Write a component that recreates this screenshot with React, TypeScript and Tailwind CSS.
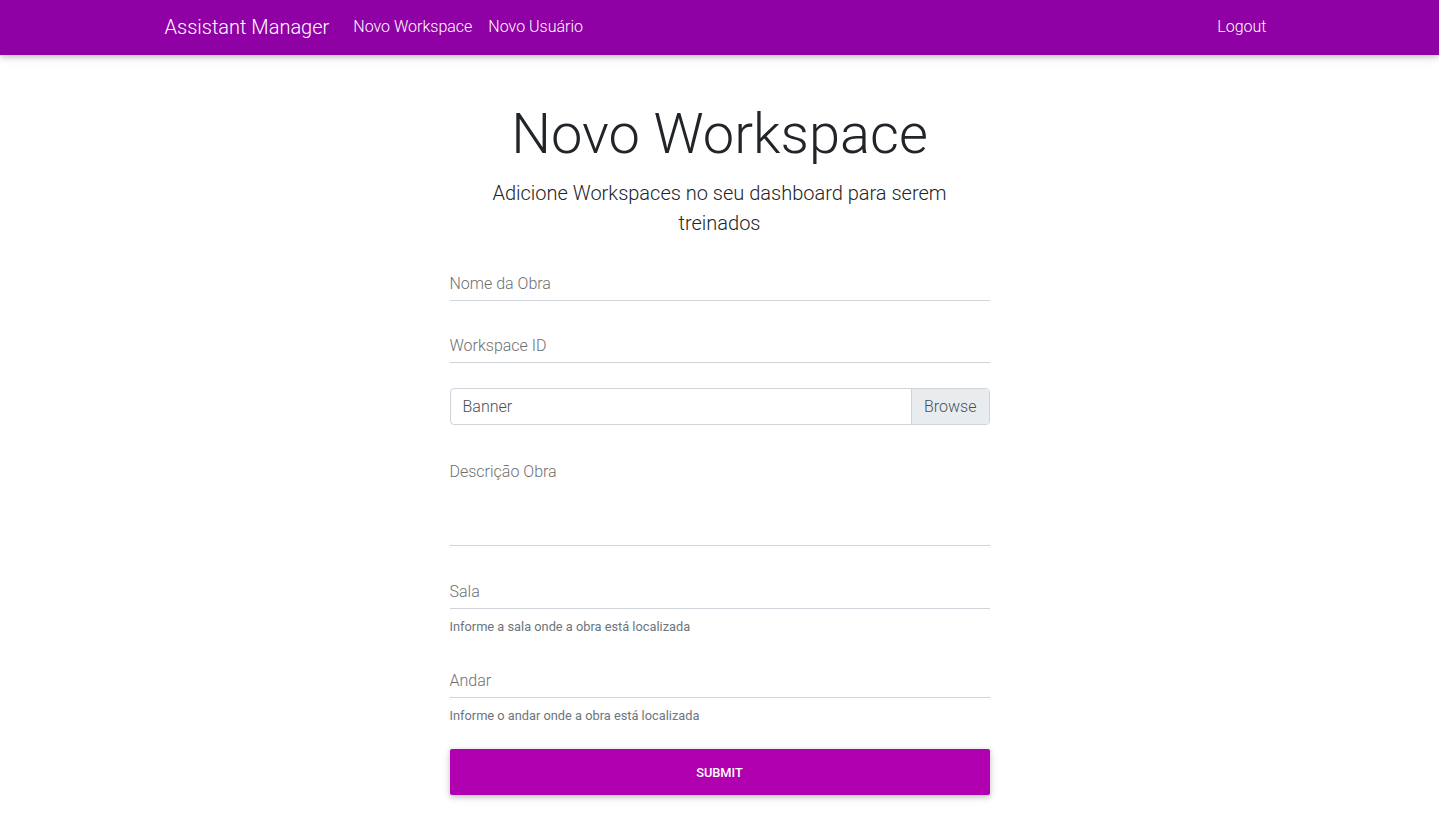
import React from "react";

function LineField({ label, help, tall }: { label: string; help?: string; tall?: boolean }) {
  return (
    <div>
      <div className={`border-b border-[#ced4da] ${tall ? "h-[86px]" : "pb-1"}`}>
        <div className="text-[16px] leading-[24px] text-[#6f6f6f]">{label}</div>
      </div>
      {help && <div className="mt-[8px] text-[12.8px] font-normal leading-[19px] text-[#6c757d]">{help}</div>}
    </div>
  );
}

export default function App() {
  return (
    <div className="min-h-[819px] bg-white font-light" style={{ fontFamily: "Roboto, 'Noto Sans', sans-serif" }}>
      <nav className="h-[55px] bg-[#8f00a5] shadow-[0_2px_5px_0_rgba(0,0,0,0.16),0_2px_10px_0_rgba(0,0,0,0.12)]">
        <div className="mx-auto flex h-full w-[1140px] items-center px-[15px] pb-[2px] text-white">
          <span className="mr-[16px] text-[20px] leading-[30px]">Assistant Manager</span>
          <a className="px-[8px] text-[16px] leading-[24px]">Novo Workspace</a>
          <a className="px-[8px] text-[16px] leading-[24px]">Novo Usuário</a>
          <a className="ml-auto px-[8px] text-[16px] leading-[24px]">Logout</a>
        </div>
      </nav>
      <main className="mx-auto w-[540px] pt-[46px] text-[#212529]">
        <h1 className="text-center text-[56px] font-light leading-[1.2]">Novo Workspace</h1>
        <p className="mt-[10px] text-center text-[20px] font-light leading-[30px]">
          Adicione Workspaces no seu dashboard para serem treinados
        </p>
        <form className="mt-[34px] flex flex-col">
          <LineField label="Nome da Obra" />
          <div className="mt-[33px]">
            <LineField label="Workspace ID" />
          </div>
          <div className="mt-[25px] flex h-[37px] overflow-hidden rounded-[4px] border border-[#ced4da]">
            <div className="flex flex-1 items-center px-[12px] text-[16px] text-[#495057]">Banner</div>
            <div className="flex items-center border-l border-[#ced4da] bg-[#e9ecef] px-[12px] text-[16px] text-[#495057]">
              Browse
            </div>
          </div>
          <div className="mt-[35px]">
            <LineField label="Descrição Obra" tall />
          </div>
          <div className="mt-[34px]">
            <LineField label="Sala" help="Informe a sala onde a obra está localizada" />
          </div>
          <div className="mt-[33px]">
            <LineField label="Andar" help="Informe o andar onde a obra está localizada" />
          </div>
          <button
            type="button"
            className="mt-[24px] h-[46px] rounded-[2px] bg-[#b000b0] text-[12.8px] font-medium uppercase text-white shadow-[0_2px_5px_0_rgba(0,0,0,0.16),0_2px_10px_0_rgba(0,0,0,0.12)]"
          >
            Submit
          </button>
        </form>
      </main>
    </div>
  );
}
